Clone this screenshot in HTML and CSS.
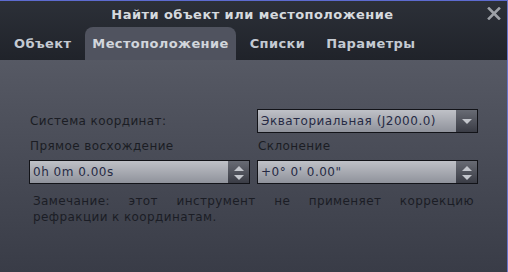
FILE: index.html
```html
<!DOCTYPE html>
<html lang="ru">
<head>
    <meta charset="UTF-8">
    <title>Найти объект или местоположение</title>
    <link rel="stylesheet" href="styles.css">
</head>
<body>
    <div class="dialog">
        <!-- Header: title + tabs -->
        <div class="header">
            <div class="titlebar">
                <span class="title">Найти объект или местоположение</span>
                <svg class="close" width="14" height="13" viewBox="0 0 14 13">
                    <path d="M2 1.5 L12 11.5 M12 1.5 L2 11.5" stroke="#9da1a7" stroke-width="2.6" stroke-linecap="square"/>
                </svg>
            </div>
            <div class="tabs">
                <div class="tab">Объект</div>
                <div class="tab active">Местоположение</div>
                <div class="tab">Списки</div>
                <div class="tab">Параметры</div>
            </div>
        </div>

        <!-- Location page -->
        <div class="content">
            <div class="form">
                <div class="label">Система координат:</div>
                <div class="combo">
                    <span class="value">Экваториальная (J2000.0)</span>
                    <span class="combo-btn"><i class="arrow-down"></i></span>
                </div>

                <div class="label">Прямое восхождение</div>
                <div class="label">Склонение</div>

                <div class="spin">
                    <span class="value">0h 0m 0.00s</span>
                    <span class="spin-btn"><i class="arrow-up"></i><i class="arrow-down"></i></span>
                </div>
                <div class="spin">
                    <span class="value">+0° 0' 0.00"</span>
                    <span class="spin-btn"><i class="arrow-up"></i><i class="arrow-down"></i></span>
                </div>
            </div>

            <p class="note">Замечание: этот инструмент не применяет коррекцию рефракции к координатам.</p>
        </div>
    </div>
</body>
</html>
```

FILE: styles.css
```css
/* General */
body {
    margin: 0;
    font-family: "DejaVu Sans", Verdana, sans-serif;
    background-color: #3a3d48;
    overflow: hidden;
}

.dialog {
    width: 507px;
    height: 271px;
    border-top: 1px solid #5d6bd0;
    border-right: 1px solid #6a74c8;
    display: flex;
    flex-direction: column;
}

/* Header */
.header {
    background: linear-gradient(#2c3038, #20232a);
}

.titlebar {
    height: 26px;
    display: flex;
    align-items: center;
    justify-content: center;
    position: relative;
}

.title {
    color: #d6dade;
    font-weight: bold;
    font-size: 13px;
    letter-spacing: 0.45px;
    padding-right: 2px;
}

.close {
    position: absolute;
    right: 6px;
    top: 6px;
}

.tabs {
    height: 33px;
    display: flex;
    align-items: flex-end;
    gap: 7px;
    padding-left: 7px;
}

.tab {
    height: 33px;
    line-height: 34px;
    padding: 0 7px;
    color: #c4cad2;
    font-weight: bold;
    font-size: 13px;
    letter-spacing: 0.38px;
    border-radius: 8px 8px 0 0;
}

.tab.active {
    background-color: #50535f;
    color: #d2d6dc;
}

/* Content */
.content {
    flex: 1;
    background: linear-gradient(#565964, #393c47);
    padding: 49px 29px 0 29px;
}

.form {
    display: grid;
    grid-template-columns: 221px 221px;
    column-gap: 7px;
    row-gap: 5px;
    align-items: center;
}

.label {
    color: #1b1d24;
    font-size: 12px;
    letter-spacing: 0.4px;
    line-height: 17px;
    padding-left: 1px;
}

.combo,
.spin {
    height: 22px;
    border: 1px solid #121318;
    background: linear-gradient(#bfc1c7, #8f929b);
    display: flex;
    align-items: center;
    justify-content: space-between;
}

.value {
    color: #262a44;
    font-size: 12px;
    letter-spacing: 0.5px;
    padding-left: 3px;
}

.combo-btn,
.spin-btn {
    width: 21px;
    height: 22px;
    background: linear-gradient(#686b74, #3a3c45);
    display: flex;
    flex-direction: column;
    align-items: center;
    justify-content: center;
}

.spin-btn {
    justify-content: space-between;
    padding: 5px 0 3px;
    box-sizing: border-box;
}

.arrow-up,
.arrow-down {
    width: 0;
    height: 0;
    border-left: 5px solid transparent;
    border-right: 5px solid transparent;
}

.arrow-up {
    border-bottom: 5px solid #c3c6cc;
}

.arrow-down {
    border-top: 5px solid #c3c6cc;
}

/* Note */
.note {
    margin: 9px 4px 0 4px;
    color: #1b1d25;
    font-size: 12px;
    letter-spacing: 0.4px;
    line-height: 16px;
    text-align: justify;
}
```
